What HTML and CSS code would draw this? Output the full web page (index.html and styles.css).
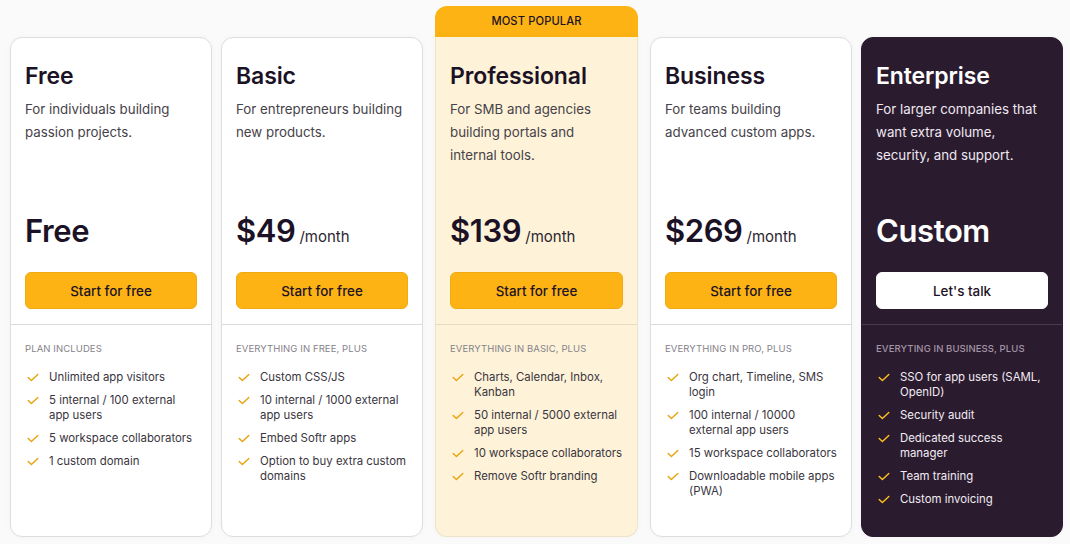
FILE: index.html
```html
<!DOCTYPE html>
<html lang="en">
<head>
<meta charset="utf-8">
<title>Pricing</title>
<link rel="stylesheet" href="styles.css">
</head>
<body>
<svg width="0" height="0" class="defs">
  <defs>
    <symbol id="check" viewBox="0 0 12 12">
      <path d="M1.2 5.6 L4.4 8.6 L10.8 2.6" fill="none" stroke="currentColor" stroke-width="1.4" stroke-linecap="round" stroke-linejoin="round"/>
    </symbol>
  </defs>
</svg>
<main class="plans">
  <section class="plan">
    <div class="plan-top">
      <h2 class="plan-name">Free</h2>
      <p class="plan-desc">For individuals building passion projects.</p>
      <div class="price"><span class="amount">Free</span></div>
      <a class="btn">Start for free</a>
    </div>
    <div class="plan-features">
      <div class="label">PLAN INCLUDES</div>
      <ul class="features">
        <li><svg class="ck"><use href="#check"/></svg><span>Unlimited app visitors</span></li>
        <li><svg class="ck"><use href="#check"/></svg><span>5 internal / 100 external app users</span></li>
        <li><svg class="ck"><use href="#check"/></svg><span>5 workspace collaborators</span></li>
        <li><svg class="ck"><use href="#check"/></svg><span>1 custom domain</span></li>
      </ul>
    </div>
  </section>

  <section class="plan">
    <div class="plan-top">
      <h2 class="plan-name">Basic</h2>
      <p class="plan-desc">For entrepreneurs building new products.</p>
      <div class="price"><span class="amount">$49</span><span class="per">/month</span></div>
      <a class="btn">Start for free</a>
    </div>
    <div class="plan-features">
      <div class="label">EVERYTHING IN FREE, PLUS</div>
      <ul class="features">
        <li><svg class="ck"><use href="#check"/></svg><span>Custom CSS/JS</span></li>
        <li><svg class="ck"><use href="#check"/></svg><span>10 internal / 1000 external app users</span></li>
        <li><svg class="ck"><use href="#check"/></svg><span>Embed Softr apps</span></li>
        <li><svg class="ck"><use href="#check"/></svg><span>Option to buy extra custom domains</span></li>
      </ul>
    </div>
  </section>

  <div class="popular-wrap">
    <div class="badge">MOST POPULAR</div>
    <section class="plan plan-pro">
      <div class="plan-top">
        <h2 class="plan-name">Professional</h2>
        <p class="plan-desc">For SMB and agencies building portals and internal tools.</p>
        <div class="price"><span class="amount">$139</span><span class="per">/month</span></div>
        <a class="btn">Start for free</a>
      </div>
      <div class="plan-features">
        <div class="label">EVERYTHING IN BASIC, PLUS</div>
        <ul class="features">
          <li><svg class="ck"><use href="#check"/></svg><span>Charts, Calendar, Inbox, Kanban</span></li>
          <li><svg class="ck"><use href="#check"/></svg><span>50 internal / 5000 external app users</span></li>
          <li><svg class="ck"><use href="#check"/></svg><span>10 workspace collaborators</span></li>
          <li><svg class="ck"><use href="#check"/></svg><span>Remove Softr branding</span></li>
        </ul>
      </div>
    </section>
  </div>

  <section class="plan">
    <div class="plan-top">
      <h2 class="plan-name">Business</h2>
      <p class="plan-desc">For teams building advanced custom apps.</p>
      <div class="price"><span class="amount">$269</span><span class="per">/month</span></div>
      <a class="btn">Start for free</a>
    </div>
    <div class="plan-features">
      <div class="label">EVERYTHING IN PRO, PLUS</div>
      <ul class="features">
        <li><svg class="ck"><use href="#check"/></svg><span>Org chart, Timeline, SMS login</span></li>
        <li><svg class="ck"><use href="#check"/></svg><span>100 internal / 10000 external app users</span></li>
        <li><svg class="ck"><use href="#check"/></svg><span>15 workspace collaborators</span></li>
        <li><svg class="ck"><use href="#check"/></svg><span>Downloadable mobile apps (PWA)</span></li>
      </ul>
    </div>
  </section>

  <section class="plan plan-ent">
    <div class="plan-top">
      <h2 class="plan-name">Enterprise</h2>
      <p class="plan-desc">For larger companies that want extra volume, security, and support.</p>
      <div class="price"><span class="amount">Custom</span></div>
      <a class="btn btn-white">Let's talk</a>
    </div>
    <div class="plan-features">
      <div class="label">EVERYTING IN BUSINESS, PLUS</div>
      <ul class="features">
        <li><svg class="ck"><use href="#check"/></svg><span>SSO for app users (SAML, OpenID)</span></li>
        <li><svg class="ck"><use href="#check"/></svg><span>Security audit</span></li>
        <li><svg class="ck"><use href="#check"/></svg><span>Dedicated success manager</span></li>
        <li><svg class="ck"><use href="#check"/></svg><span>Team training</span></li>
        <li><svg class="ck"><use href="#check"/></svg><span>Custom invoicing</span></li>
      </ul>
    </div>
  </section>
</main>
</body>
</html>
```

FILE: styles.css
```css
* { box-sizing: border-box; }

html, body {
  margin: 0;
  padding: 0;
}

body {
  background: #fafafb;
  font-family: Inter, "Noto Sans", sans-serif;
  color: #1c1225;
  width: 1070px;
  height: 544px;
  overflow: hidden;
}

.defs { position: absolute; }

.plans {
  display: flex;
  align-items: flex-end;
  gap: 9px;
  padding: 6px 0 0 10px;
  height: 537px;
}

.plan {
  width: 202px;
  height: 500px;
  background: #fff;
  border: 1px solid #dedde2;
  border-radius: 12px;
  display: flex;
  flex-direction: column;
  box-shadow: 0 0 6px rgba(0, 0, 0, 0.03);
}

.popular-wrap {
  display: flex;
  flex-direction: column;
  width: 203px;
  margin: 0 3px;
}

.badge {
  height: 31px;
  background: #fdb313;
  border-radius: 12px 12px 0 0;
  font-size: 11.2px;
  font-weight: 500;
  letter-spacing: 0.1px;
  color: #1c1225;
  display: flex;
  align-items: center;
  justify-content: center;
  padding-bottom: 2px;
}

.plan-pro {
  width: 203px;
  background: #fef3d8;
  border-color: #efe3c6;
  border-top-color: #fef3d8;
  border-radius: 0 0 12px 12px;
}

.plan-top {
  padding: 24px 14px 15px;
  border-bottom: 1px solid #dcdbe0;
}

.plan-pro .plan-top { border-bottom-color: #e6dcc4; }

.plan-name {
  margin: 0;
  font-size: 23px;
  line-height: 28px;
  font-weight: 600;
  letter-spacing: -0.1px;
}

.plan-desc {
  margin: 8px 0 0;
  font-size: 13.3px;
  line-height: 23px;
  color: #46424a;
  min-height: 69px;
}

.price {
  margin-top: 45px;
  height: 38px;
  display: flex;
  align-items: baseline;
  gap: 4px;
}

.amount {
  font-size: 31px;
  line-height: 38px;
  font-weight: 600;
  letter-spacing: -0.4px;
}

.per {
  font-size: 15px;
  color: #2c2630;
}

.btn {
  display: flex;
  align-items: center;
  justify-content: center;
  height: 37px;
  margin-top: 22px;
  background: #fdb313;
  border: 1px solid #eeaa10;
  border-radius: 6px;
  font-size: 13.4px;
  font-weight: 500;
  color: #1c1225;
}

.plan-features {
  padding: 17px 13.5px 0 14px;
}

.label {
  font-size: 9.5px;
  line-height: 14px;
  color: #85828a;
  letter-spacing: 0.1px;
}

.features {
  list-style: none;
  margin: 14px 0 0;
  padding: 0;
  display: flex;
  flex-direction: column;
  gap: 8px;
}

.features li {
  display: flex;
  align-items: flex-start;
  gap: 10px;
  font-size: 11.4px;
  line-height: 15px;
  color: #3a353e;
}

.ck {
  flex: none;
  width: 12px;
  height: 12px;
  margin: 2px 0 0 2px;
  color: #e9a20c;
}

/* Enterprise */
.plan-ent {
  background: #2b1b2f;
  border-color: #2b1b2f;
  color: #fff;
}

.plan-ent .plan-top { border-bottom-color: #4a3a4e; }
.plan-ent .plan-desc { color: #eee8f0; }
.plan-ent .label { color: #a395a6; font-weight: 500; }
.plan-ent .features li { color: #f1ebf2; }
.plan-ent .ck { color: #ffc21c; }

.btn-white {
  background: #fff;
  border-color: #fff;
}
```
